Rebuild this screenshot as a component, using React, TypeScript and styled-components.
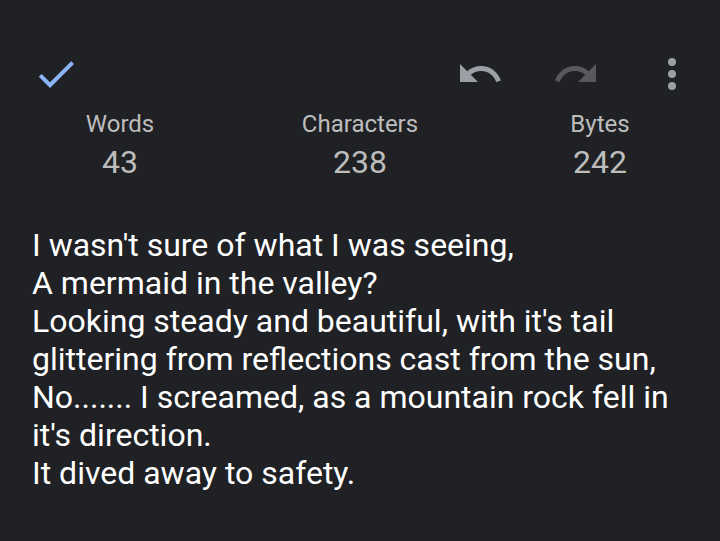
import React, { useState } from "react";
import styled, { createGlobalStyle } from "styled-components";

const GlobalStyle = createGlobalStyle`
  * { box-sizing: border-box; }
  body {
    margin: 0;
    background: #202124;
    font-family: Roboto, "Noto Sans", sans-serif;
  }
`;

const Page = styled.main`
  min-height: 100vh;
  display: flex;
  flex-direction: column;
  background: #202124;
`;

const Toolbar = styled.header`
  display: flex;
  align-items: center;
  justify-content: space-between;
  padding: 50px 24px 0 32px;
`;

const Actions = styled.div`
  display: flex;
  align-items: center;
  gap: 48px;
`;

const IconButton = styled.button<{ $color: string }>`
  display: flex;
  padding: 0;
  border: 0;
  background: none;
  color: ${({ $color }) => $color};
`;

const Icon = styled.svg`
  display: block;
  width: 48px;
  height: 48px;
  fill: currentColor;
`;

const Stats = styled.dl`
  display: grid;
  grid-template-columns: repeat(3, 1fr);
  margin: 10px 0 0;
  text-align: center;
  color: #bdbdbd;
`;

const Stat = styled.div`
  display: flex;
  flex-direction: column;
`;

const StatLabel = styled.dt`
  font-size: 24px;
  line-height: 32px;
`;

const StatValue = styled.dd`
  margin: 0;
  font-size: 32px;
  line-height: 44px;
`;

const Note = styled.textarea`
  flex: 1;
  width: 100%;
  margin-top: 42px;
  padding: 0 32px;
  border: 0;
  outline: 0;
  resize: none;
  overflow: hidden;
  background: transparent;
  color: #ffffff;
  font-family: inherit;
  font-size: 32px;
  line-height: 38px;
`;

const initialText = `I wasn't sure of what I was seeing,
A mermaid in the valley?
Looking steady and beautiful, with it's tail glittering from reflections cast from the sun,
No....... I screamed, as a mountain rock fell in it's direction.
It dived away to safety.`;

const stats = [
  { label: "Words", value: 43 },
  { label: "Characters", value: 238 },
  { label: "Bytes", value: 242 },
];

export default function App() {
  const [text, setText] = useState(initialText);
  return (
    <Page>
      <GlobalStyle />
      <Toolbar>
        <IconButton type="button" aria-label="Done" $color="#8ab4f8">
          <Icon viewBox="0 0 24 24">
            <path d="M9 16.17L4.83 12l-1.42 1.41L9 19 21 7l-1.41-1.41z" />
          </Icon>
        </IconButton>
        <Actions>
          <IconButton type="button" aria-label="Undo" $color="#9aa0a6">
            <Icon viewBox="0 0 24 24">
              <path d="M12.5 8c-2.65 0-5.05.99-6.9 2.6L2 7v9h9l-3.62-3.62c1.39-1.16 3.16-1.88 5.12-1.88 3.54 0 6.55 2.31 7.6 5.5l2.37-.78C21.08 11.03 17.15 8 12.5 8z" />
            </Icon>
          </IconButton>
          <IconButton type="button" aria-label="Redo" disabled $color="#58595c">
            <Icon viewBox="0 0 24 24">
              <path d="M18.4 10.6C16.55 8.99 14.15 8 11.5 8c-4.65 0-8.58 3.03-9.96 7.22L3.9 16c1.05-3.19 4.05-5.5 7.6-5.5 1.95 0 3.73.72 5.12 1.88L13 16h9V7l-3.6 3.6z" />
            </Icon>
          </IconButton>
          <IconButton type="button" aria-label="More options" $color="#9aa0a6">
            <Icon viewBox="0 0 24 24">
              <circle cx="12" cy="6" r="2" />
              <circle cx="12" cy="12" r="2" />
              <circle cx="12" cy="18" r="2" />
            </Icon>
          </IconButton>
        </Actions>
      </Toolbar>
      <Stats>
        {stats.map((s) => (
          <Stat key={s.label}>
            <StatLabel>{s.label}</StatLabel>
            <StatValue>{s.value}</StatValue>
          </Stat>
        ))}
      </Stats>
      <Note
        aria-label="Note text"
        spellCheck={false}
        value={text}
        onChange={(e) => setText(e.target.value)}
      />
    </Page>
  );
}
